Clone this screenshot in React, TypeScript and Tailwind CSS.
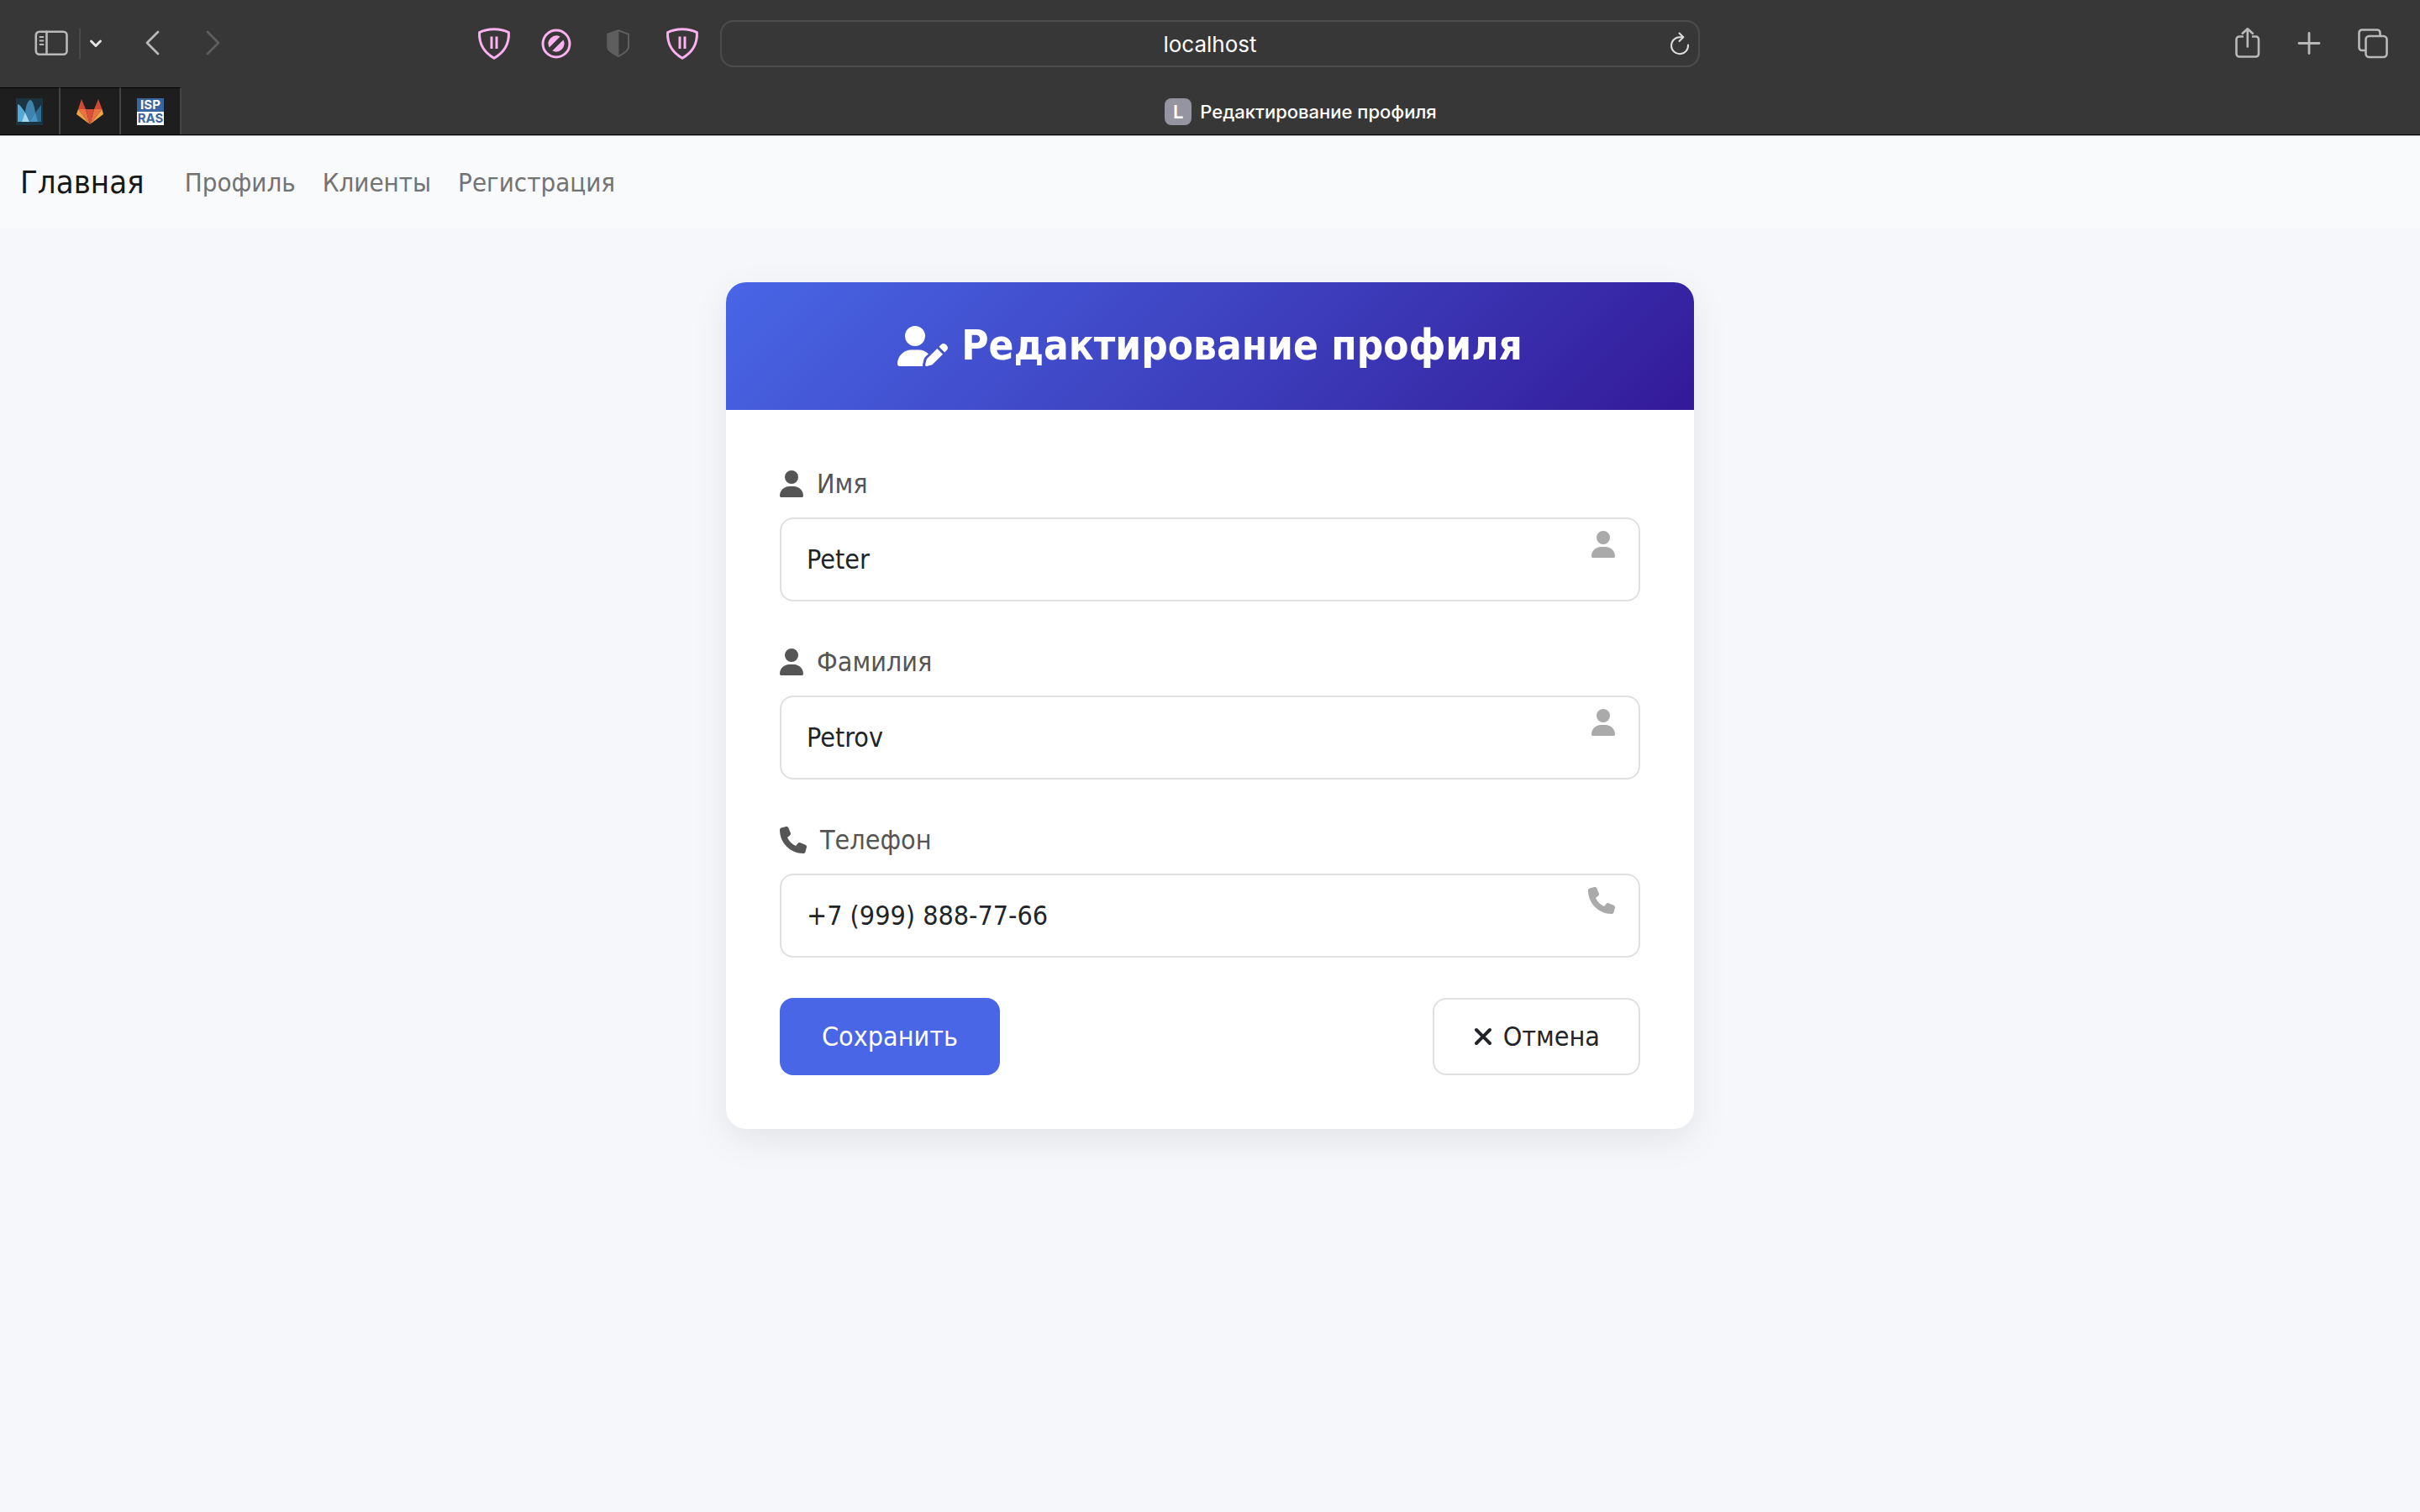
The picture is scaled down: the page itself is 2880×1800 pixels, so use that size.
import type { ReactNode } from "react";
import { FaPhone, FaUser, FaUserPen, FaXmark } from "react-icons/fa6";

const line = {
  fill: "none",
  stroke: "currentColor",
  strokeLinecap: "round",
  strokeLinejoin: "round",
} as const;

function SidebarIcon() {
  return (
    <svg className="h-8 w-10" viewBox="0 0 40 32" {...line} strokeWidth="2.6">
      <rect x="1.8" y="1.8" width="36.7" height="27" rx="4" />
      <path d="M14.5 1.8v27" />
      <path d="M6.5 8h4M6.5 12.5h4M6.5 17h4" strokeWidth="1.8" />
    </svg>
  );
}

function ShieldPauseIcon() {
  return (
    <svg className="h-10 w-10" viewBox="0 0 40 40" {...line} strokeWidth="3">
      <path d="M2.6 6.6C13 1.4 27 1.4 37.4 6.6C38 18.5 33 29.8 20 37.2C7 29.8 2 18.5 2.6 6.6Z" />
      <path d="M17 11.5v14.5M23 11.5v14.5" strokeLinecap="butt" />
    </svg>
  );
}

function BlockIcon() {
  return (
    <svg className="h-9 w-9" viewBox="0 0 36 36">
      <circle cx="18" cy="18" r="16" fill="none" stroke="currentColor" strokeWidth="3" />
      <path d="M9.6 22.6A9.8 9.8 0 0 1 22.6 9.4Z" fill="currentColor" />
      <path d="M26.4 13.4A9.8 9.8 0 0 1 13.4 26.6Z" fill="currentColor" />
    </svg>
  );
}

function HalfShieldIcon() {
  return (
    <svg className="h-[34px] w-7" viewBox="0 0 28 34">
      <path
        d="M14 1.2L26 5.6V21c0 4-5 7-12 11.2C7 28 1.4 25 1.4 21V5.6Z"
        fill="none"
        stroke="currentColor"
        strokeWidth="2"
        strokeLinejoin="round"
      />
      <path d="M14.4 0.6V33C6 28.5 0.4 25.5 0.4 21V5Z" fill="currentColor" />
    </svg>
  );
}

function ReloadIcon() {
  return (
    <svg className="h-7 w-6" viewBox="0 0 24 28" {...line} strokeWidth="2">
      <path d="M22 15.5A10 10 0 1 1 12 6.2H16" />
      <path d="M11.5 1.5L16.3 6.2L11.5 11" />
    </svg>
  );
}

function ShareIcon() {
  return (
    <svg className="h-[38px] w-[30px]" viewBox="0 0 30 38" {...line} strokeWidth="2.6">
      <path
        d="M10 10.500H5a3.5 3.5 0 0 0-3.5 3.5V31a3.5 3.5 0 0 0 3.5 3.5H24.5a3.5 3.5 0 0 0 3.5-3.5V14a3.5 3.5 0 0 0-3.5-3.5H20"
        strokeLinecap="butt"
      />
      <path d="M14.8 22.5V1.5M8.8 6.8L14.8 1.3L20.8 6.8" />
    </svg>
  );
}

function TabsIcon() {
  return (
    <svg className="h-9 w-9" viewBox="0 0 36 36" {...line} strokeWidth="2.6">
      <rect x="9.5" y="9" width="25" height="25" rx="4" />
      <path
        d="M9 26H5a3.5 3.5 0 0 1-3.5-3.5V5A3.5 3.5 0 0 1 5 1.5H23A3.5 3.5 0 0 1 26.5 5V9"
        strokeLinecap="butt"
      />
    </svg>
  );
}

function WavesFavicon() {
  return (
    <svg className="h-8 w-8" viewBox="0 0 32 32">
      <rect width="32" height="32" fill="#1a3442" />
      <path d="M16 28L21.5 19L30 8V28Z" fill="#2f6c93" />
      <path d="M11 16C12 7 15 2 17 2C19.5 2 22 9 23 17L16 28Z" fill="#3f83ad" />
      <path d="M2 28V7C4 7 7 11 11 17L16 28Z" fill="#56a8d6" />
      <path d="M7 28L11 17L16 28Z" fill="#a5d8f0" />
      <path d="M16 28L23 17L26 28Z" fill="#4a93c0" />
    </svg>
  );
}

function FoxFavicon() {
  return (
    <svg className="h-8 w-8" viewBox="0 0 32 32">
      <path d="M6 1L11 13H2Z" fill="#d04a33" />
      <path d="M26 1L30.5 13H21Z" fill="#d04a33" />
      <path d="M2 13L0 19L16 31Z" fill="#eea547" />
      <path d="M30.5 13L32 19L16 31Z" fill="#eea547" />
      <path d="M2 13H11L16 31Z" fill="#ea7440" />
      <path d="M30.5 13H21L16 31Z" fill="#ea7440" />
      <path d="M11 13H21L16 31Z" fill="#d9513a" />
    </svg>
  );
}

function IspFavicon() {
  return (
    <span className="flex h-8 w-8 flex-col text-[15px] leading-4 font-bold">
      <span className="flex h-4 justify-center bg-[#3a669f] text-white">ISP</span>
      <span className="flex h-4 justify-center bg-white text-[#3a669f]">RAS</span>
    </span>
  );
}

function PinnedTab({ label, children }: { label: string; children: ReactNode }) {
  return (
    <button
      type="button"
      aria-label={label}
      className="flex w-[72px] items-center justify-center border-t border-r-2 border-t-black border-r-[#444444] bg-[#1e1e1e]"
    >
      {children}
    </button>
  );
}

function ToolButton({ label, children }: { label: string; children: ReactNode }) {
  return (
    <button type="button" aria-label={label} className="flex items-center justify-center">
      {children}
    </button>
  );
}

function BrowserChrome() {
  return (
    <header className="border-b border-black bg-[#373737] font-['Inter',sans-serif] text-[#b9b9b9]">
      <div className="grid h-[104px] grid-cols-[1fr_40.5%_1fr] items-center">
        <div className="flex items-center justify-between pr-[25px] pl-[41px]">
          <div className="flex items-center">
            <ToolButton label="Боковая панель">
              <SidebarIcon />
            </ToolButton>
            <span className="ml-[13px] h-9 w-[2px] bg-[#4a4a4a]" />
            <span className="ml-[10px] text-[#e4e4e4]">
              <ToolButton label="Группы вкладок">
                <svg className="h-4 w-4" viewBox="0 0 16 16" {...line} strokeWidth="3">
                  <path d="M2.5 5L8 10.5L13.5 5" />
                </svg>
              </ToolButton>
            </span>
            <span className="ml-[50px] flex">
              <ToolButton label="Назад">
                <svg className="h-8 w-5" viewBox="0 0 20 32" {...line} strokeWidth="2.8">
                  <path d="M16 2L3 15L16 28" />
                </svg>
              </ToolButton>
            </span>
            <span className="ml-[52px] flex text-[#5e5e5e]">
              <ToolButton label="Вперёд">
                <svg className="h-8 w-5" viewBox="0 0 20 32" {...line} strokeWidth="2.8">
                  <path d="M3 2L16 15L3 28" />
                </svg>
              </ToolButton>
            </span>
          </div>
          <div className="flex items-center text-[#fdb1ef]">
            <ToolButton label="Блокировщик">
              <ShieldPauseIcon />
            </ToolButton>
            <span className="ml-9 flex">
              <ToolButton label="Запрет содержимого">
                <BlockIcon />
              </ToolButton>
            </span>
            <span className="ml-[42px] flex text-[#5e5e5e]">
              <ToolButton label="Отчёт о конфиденциальности">
                <HalfShieldIcon />
              </ToolButton>
            </span>
            <span className="ml-[42px] flex">
              <ToolButton label="Защита">
                <ShieldPauseIcon />
              </ToolButton>
            </span>
          </div>
        </div>
        <div className="relative flex h-14 items-center rounded-2xl border-2 border-[#4d4d4d]">
          <input
            aria-label="Адрес"
            defaultValue="localhost"
            className="h-full w-full bg-transparent text-center text-[26px] text-white outline-none"
          />
          <span className="absolute right-[10px] flex text-[#dedede]">
            <ToolButton label="Обновить">
              <ReloadIcon />
            </ToolButton>
          </span>
        </div>
        <div className="flex items-center justify-end gap-[44px] pr-[38px]">
          <ToolButton label="Поделиться">
            <ShareIcon />
          </ToolButton>
          <ToolButton label="Новая вкладка">
            <svg className="h-7 w-7" viewBox="0 0 28 28" {...line} strokeWidth="2.8">
              <path d="M14 1.5V25.5M2 13.500H26" />
            </svg>
          </ToolButton>
          <ToolButton label="Все вкладки">
            <TabsIcon />
          </ToolButton>
        </div>
      </div>
      <div className="flex h-14">
        <PinnedTab label="Waves">
          <WavesFavicon />
        </PinnedTab>
        <PinnedTab label="GitLab">
          <FoxFavicon />
        </PinnedTab>
        <PinnedTab label="ISP RAS">
          <IspFavicon />
        </PinnedTab>
        <div className="flex flex-1 items-center justify-center gap-[10px] pt-[2px] text-[22px] font-medium text-white">
          <span className="flex h-8 w-8 items-center justify-center rounded-lg bg-[#9595a1] font-semibold">L</span>
          <span>Редактирование профиля</span>
        </div>
      </div>
    </header>
  );
}

type FieldProps = { id: string; label: string; value: string; icon: ReactNode; type?: string };

function Field({ id, label, value, icon, type = "text" }: FieldProps) {
  return (
    <div className="mb-12">
      <label htmlFor={id} className="mb-4 flex items-center gap-4 leading-[48px] text-[#555555]">
        {icon}
        {label}
      </label>
      <div className="relative">
        <input
          id={id}
          type={type}
          defaultValue={value}
          className="h-[100px] w-full rounded-2xl border-2 border-[#e0e0e0] bg-white px-[30px] text-[#212529] outline-none"
        />
        <span className="absolute top-4 right-[30px] text-[#aaaaaa]">{icon}</span>
      </div>
    </div>
  );
}

export default function App() {
  return (
    <div className="min-h-screen bg-[#f5f7fb] font-['DejaVu_Sans_Condensed','DejaVu_Sans',sans-serif] text-[32px] text-[#212529]">
      <BrowserChrome />
      <nav className="flex h-[111px] items-center border-t border-[#b4b4b6] bg-[#f8fafc] px-6">
        <a href="#home" className="text-[38px] leading-[60px] text-[#181818]">
          Главная
        </a>
        <div className="ml-12 flex gap-8 text-[31px] leading-[48px] text-[#737374]">
          <a href="#profile">Профиль</a>
          <a href="#clients">Клиенты</a>
          <a href="#register">Регистрация</a>
        </div>
      </nav>
      <main className="px-6 py-16">
        <section className="mx-auto w-full max-w-[1152px] overflow-hidden rounded-3xl bg-white shadow-[0_14px_44px_rgba(0,0,0,0.08)]">
          <h1 className="flex h-[152px] items-center justify-center gap-4 bg-linear-135 from-[#4866e6] to-[#33189a] text-[49px] font-bold text-white">
            <FaUserPen className="h-12 w-[60px]" />
            Редактирование профиля
          </h1>
          <form className="p-16" onSubmit={(event) => event.preventDefault()}>
            <Field id="first-name" label="Имя" value="Peter" icon={<FaUser className="h-8 w-7" />} />
            <Field id="last-name" label="Фамилия" value="Petrov" icon={<FaUser className="h-8 w-7" />} />
            <Field
              id="phone"
              label="Телефон"
              value="+7 (999) 888-77-66"
              type="tel"
              icon={<FaPhone className="h-8 w-8" />}
            />
            <div className="flex justify-between">
              <button type="submit" className="h-[92px] rounded-2xl bg-[#4866e5] px-[50px] text-white">
                Сохранить
              </button>
              <button
                type="button"
                className="flex h-[92px] items-center gap-3 rounded-2xl border-2 border-[#e0e0e0] bg-white px-[46px]"
              >
                <FaXmark className="h-8 w-6" />
                Отмена
              </button>
            </div>
          </form>
        </section>
      </main>
    </div>
  );
}
